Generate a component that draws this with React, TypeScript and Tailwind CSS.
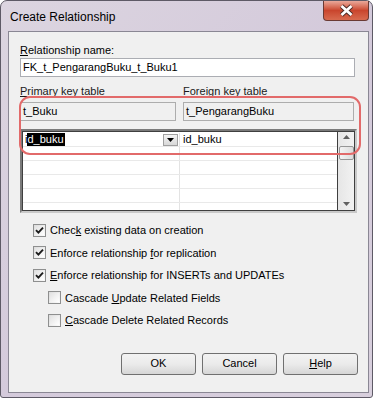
const font = { fontFamily: '"Liberation Sans", Arial, sans-serif' }

function CheckBox({ checked }: { checked: boolean }) {
  return (
    <div className="w-[13px] h-[13px] border border-[#8e8f8f] bg-gradient-to-br from-[#dcdcdc] to-[#fbfbfb] p-[1px] shrink-0">
      <div className="w-full h-full bg-gradient-to-br from-[#e2e2e2] to-white flex items-center justify-center">
        {checked && (
          <svg width="9" height="9" viewBox="0 0 9 9">
            <path d="M1 4.2 L3.4 6.6 L8 1.6" stroke="#1c1c1c" strokeWidth="1.9" fill="none" />
          </svg>
        )}
      </div>
    </div>
  )
}

function CheckRow({ checked, indent, children }: { checked: boolean; indent?: boolean; children: React.ReactNode }) {
  return (
    <div className={`flex items-center gap-[4px] h-[22.5px] ${indent ? 'pl-[28px]' : 'pl-[13px]'}`}>
      <CheckBox checked={checked} />
      <span className="text-[11px] text-black">{children}</span>
    </div>
  )
}

function Btn({ children }: { children: React.ReactNode }) {
  return (
    <div className="w-[75px] h-[22px] rounded-[3px] border border-[#707070] bg-gradient-to-b from-[#f2f2f2] via-[#ebebeb] to-[#d6d6d6] flex items-center justify-center text-[11px] text-black">
      {children}
    </div>
  )
}

export default function App() {
  return (
    <div className="w-[379px] h-[400px] bg-white overflow-hidden" style={font}>
      <div className="relative w-[373px] h-[398px] rounded-t-[7px] rounded-b-[3px] border border-[#5e5a66] bg-gradient-to-br from-[#dcd5e0] via-[#d4cadb] to-[#d8cfdd] pl-[7px] pr-[3px] pb-[4px]">
        {/* title bar */}
        <div className="h-[30px] flex items-center pl-[2px] pt-[2px]">
          <span className="text-[12px] text-black">Create Relationship</span>
        </div>
        <div className="absolute top-0 right-[3px] w-[46px] h-[20px] rounded-b-[4px] border border-t-0 border-[#6a3a34] bg-gradient-to-b from-[#e9a89a] via-[#c9452d] to-[#d86a4f] flex items-center justify-center">
          <svg width="15" height="13" viewBox="0 0 15 13">
            <path d="M2.5 2 L12.5 11 M12.5 2 L2.5 11" stroke="#4a2a26" strokeWidth="4.6" />
            <path d="M2.5 2 L12.5 11 M12.5 2 L2.5 11" stroke="#ffffff" strokeWidth="2.8" />
          </svg>
        </div>

        {/* client area */}
        <div className="relative h-[362px] bg-[#f0f0f0] border border-[#8a8794] pl-[11px] pr-[13px] pt-[10px]">
          <div className="h-[16px] text-[11px] leading-[16px] text-black"><u>R</u>elationship name:</div>
          <div className="h-[19px] border border-[#abadb3] bg-white text-[11px] leading-[17px] pl-[2px]">FK_t_PengarangBuku_t_Buku1</div>

          <div className="flex mt-[4px] h-[20px] items-center text-[11px] text-[#1a1a1a]">
            <div className="w-[163px]"><u>P</u>rimary key table</div>
            <div>F<u>o</u>reign key table</div>
          </div>
          <div className="flex mt-[1px] gap-[7px]">
            <div className="w-[156px] h-[19px] border border-[#adadad] bg-[#f0f0f0] text-[11px] leading-[17px] pl-[2px]">t_Buku</div>
            <div className="w-[171px] h-[19px] border border-[#adadad] bg-[#f0f0f0] text-[11px] leading-[17px] pl-[2px]">t_PengarangBuku</div>
          </div>

          {/* columns grid */}
          <div className="mt-[8px] h-[84px] w-[337px] border-2 border-t-[#7a7a7a] border-l-[#7a7a7a] border-r-[#c9c9c9] border-b-[#c9c9c9] bg-white flex">
            <div className="flex-1 border border-[#3f3f3f] pt-[1px] flex flex-col">
              {[0, 1, 2, 3, 4].map((i) => (
                <div key={i} className="flex h-[14px] border-b border-[#e9e9e9] text-[11px] leading-[13px]">
                  <div className="w-[157px] border-r border-[#e3e3e3] flex items-center pl-[2px]">
                    {i === 0 && (
                      <>
                        <span>i</span>
                        <span className="bg-black text-white pr-[1px]">d_buku</span>
                        <div className="ml-auto mr-[1px] w-[15px] h-[12px] bg-gradient-to-b from-[#f4f4f4] to-[#d8d8d8] border border-[#a0a0a0] flex items-center justify-center">
                          <svg width="7" height="4" viewBox="0 0 7 4"><path d="M0 0 H7 L3.5 4 Z" fill="#000" /></svg>
                        </div>
                      </>
                    )}
                  </div>
                  <div className="flex-1 pl-[3px] flex items-center">{i === 0 && 'id_buku'}</div>
                </div>
              ))}
              <div className="flex-1 flex">
                <div className="w-[157px] border-r border-[#e3e3e3]" />
              </div>
            </div>
            <div className="w-[17px] bg-gradient-to-r from-[#e6e6e6] to-[#f2f2f2] border-y border-r border-[#3f3f3f] flex flex-col items-center pt-[3px]">
              <svg width="7" height="4" viewBox="0 0 7 4"><path d="M0 4 H7 L3.5 0 Z" fill="#606060" /></svg>
              <div className="mt-[7px] w-[15px] h-[14px] rounded-[2px] border border-[#969696] bg-gradient-to-r from-[#f3f3f3] to-[#dcdcdc]" />
              <div className="flex-1" />
              <svg className="mb-[4px]" width="7" height="4" viewBox="0 0 7 4"><path d="M0 0 H7 L3.5 4 Z" fill="#606060" /></svg>
            </div>
          </div>

          {/* options */}
          <div className="mt-[6px]">
            <CheckRow checked>Chec<u>k</u> existing data on creation</CheckRow>
            <CheckRow checked>Enforce relationship <u>f</u>or replication</CheckRow>
            <CheckRow checked><u>E</u>nforce relationship for INSERTs and UPDATEs</CheckRow>
            <CheckRow checked={false} indent>Cascade <u>U</u>pdate Related Fields</CheckRow>
            <CheckRow checked={false} indent><u>C</u>ascade Delete Related Records</CheckRow>
          </div>

          <div className="flex justify-end gap-[6px] mt-[21px] mr-[-3px]">
            <Btn>OK</Btn>
            <Btn>Cancel</Btn>
            <Btn><u>H</u>elp</Btn>
          </div>

          {/* red annotation */}
          <div className="absolute left-[10px] top-[64px] w-[342px] h-[59px] rounded-[11px] border-2 border-[#e26a6a]" />
        </div>
      </div>
    </div>
  )
}
